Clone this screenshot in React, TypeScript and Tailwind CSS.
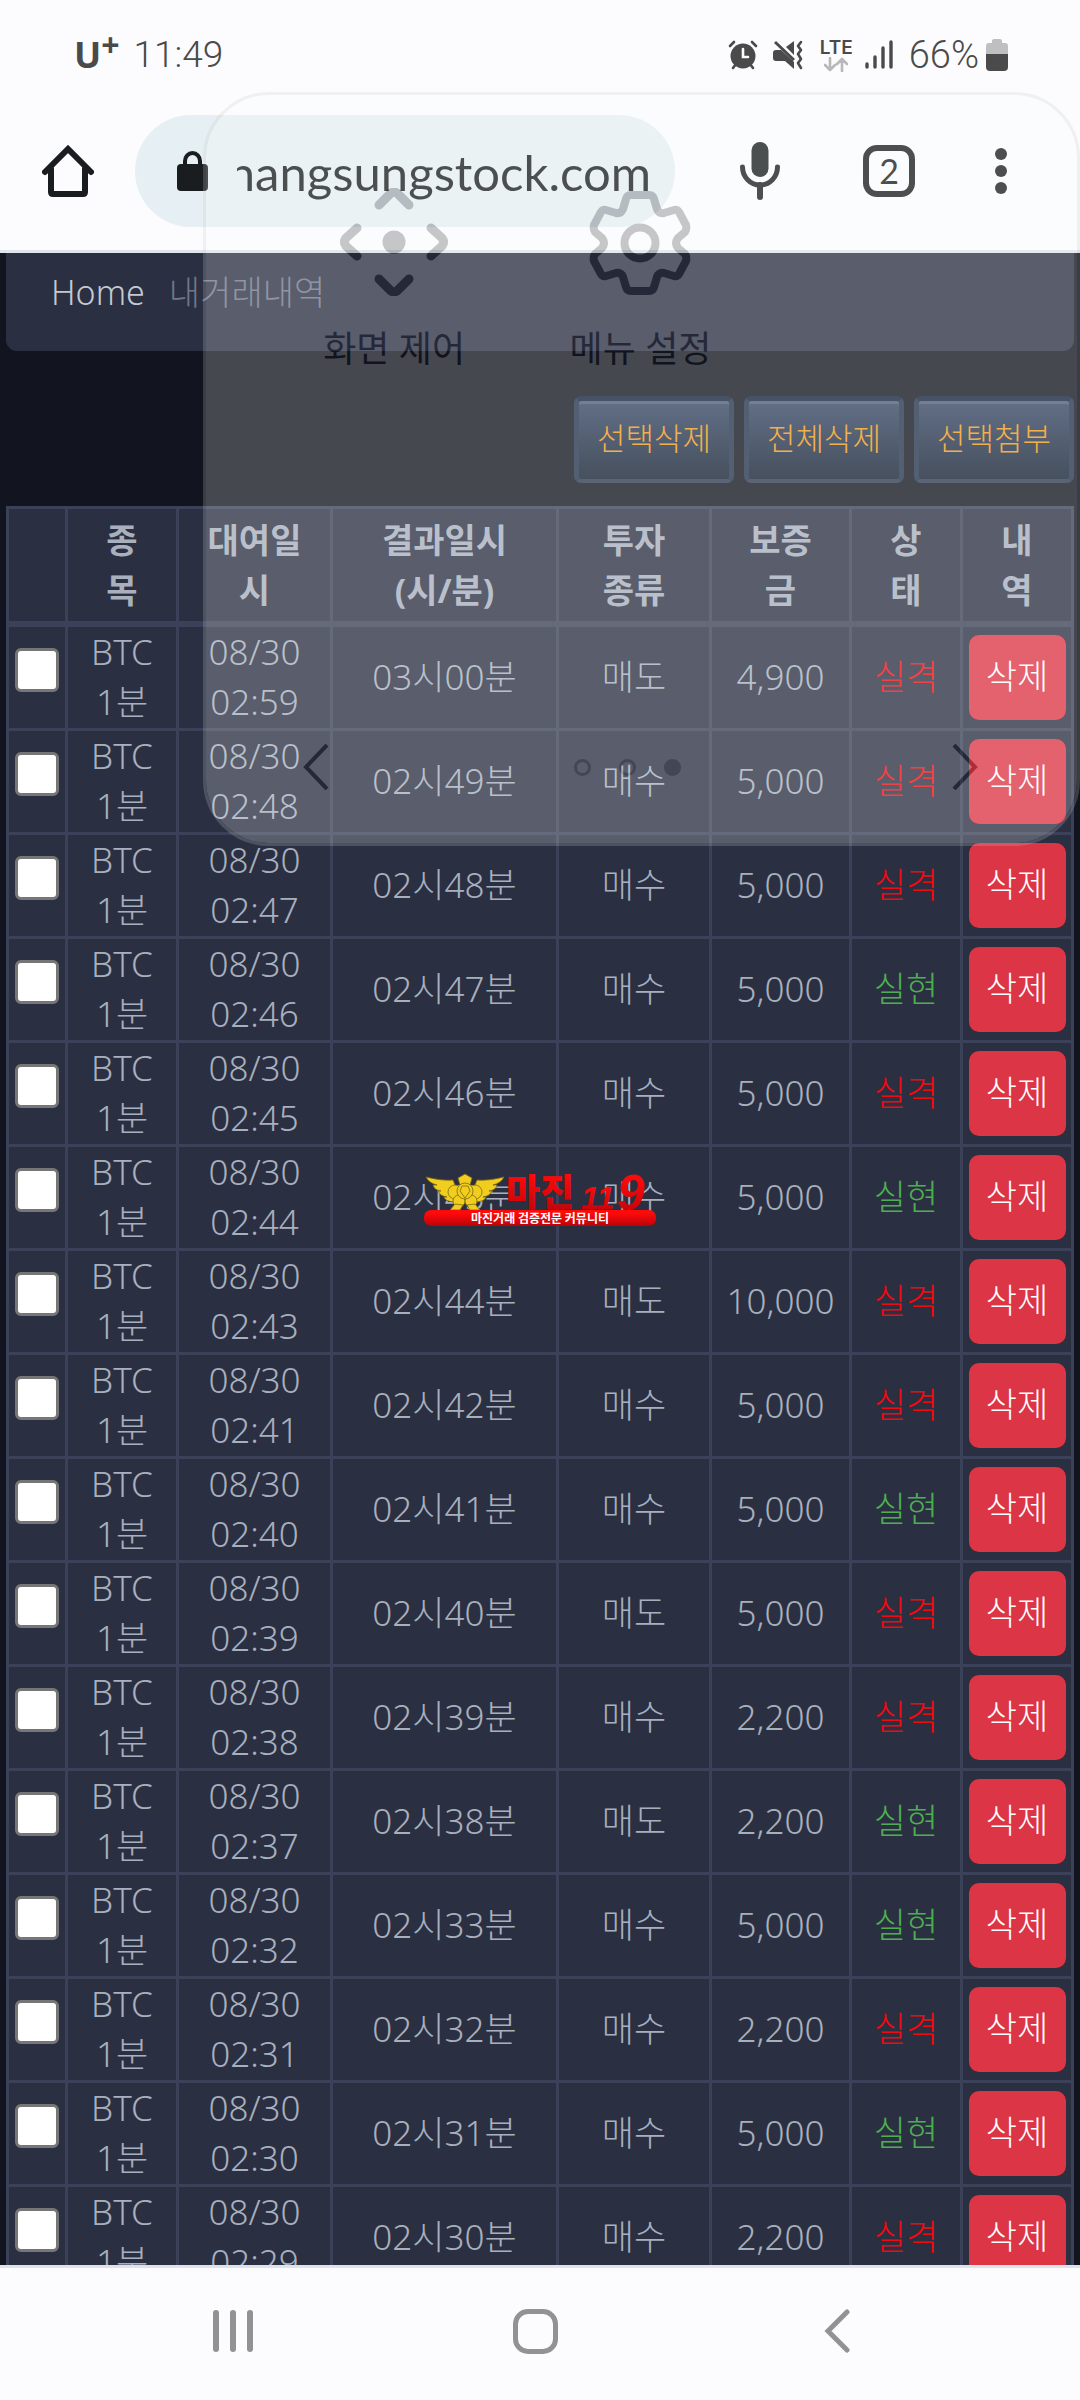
import { clsx } from "clsx";

type Trade = {
  time: string;
  result: string;
  type: string;
  deposit: string;
  won: boolean;
};

const trades: Trade[] = [
  { time: "02:59", result: "03시00분", type: "매도", deposit: "4,900", won: false },
  { time: "02:48", result: "02시49분", type: "매수", deposit: "5,000", won: false },
  { time: "02:47", result: "02시48분", type: "매수", deposit: "5,000", won: false },
  { time: "02:46", result: "02시47분", type: "매수", deposit: "5,000", won: true },
  { time: "02:45", result: "02시46분", type: "매수", deposit: "5,000", won: false },
  { time: "02:44", result: "02시45분", type: "매수", deposit: "5,000", won: true },
  { time: "02:43", result: "02시44분", type: "매도", deposit: "10,000", won: false },
  { time: "02:41", result: "02시42분", type: "매수", deposit: "5,000", won: false },
  { time: "02:40", result: "02시41분", type: "매수", deposit: "5,000", won: true },
  { time: "02:39", result: "02시40분", type: "매도", deposit: "5,000", won: false },
  { time: "02:38", result: "02시39분", type: "매수", deposit: "2,200", won: false },
  { time: "02:37", result: "02시38분", type: "매도", deposit: "2,200", won: true },
  { time: "02:32", result: "02시33분", type: "매수", deposit: "5,000", won: true },
  { time: "02:31", result: "02시32분", type: "매수", deposit: "2,200", won: false },
  { time: "02:30", result: "02시31분", type: "매수", deposit: "5,000", won: true },
  { time: "02:29", result: "02시30분", type: "매수", deposit: "2,200", won: false },
];

const headers = [
  [""],
  ["종", "목"],
  ["대여일", "시"],
  ["결과일시", "(시/분)"],
  ["투자", "종류"],
  ["보증", "금"],
  ["상", "태"],
  ["내", "역"],
];

const cell = "border-r-[3px] border-b-[3px] border-[#3b4158] px-0 pt-0 pb-[1px]";

function StatusBar() {
  return (
    <div className="flex h-[92px] items-center justify-between pt-[18px] pr-[72px] pl-[74px] text-[#4a4a4a]">
      <div className="flex items-center gap-[14px]">
        <div className="flex items-start font-['Open_Sans',sans-serif] font-bold">
          <span className="text-[36px] leading-[40px]">U</span>
          <span className="text-[32px] leading-[20px]">+</span>
        </div>
        <span className="font-['Roboto',sans-serif] text-[37px] leading-[40px] font-light">11:49</span>
      </div>
      <div className="flex items-center">
        {/* Alarm */}
        <svg className="mr-[15px] h-[30px] w-[30px]" viewBox="0 0 30 30" fill="none" stroke="currentColor" strokeLinecap="round">
          <circle cx="15" cy="16" r="12.5" fill="currentColor" stroke="none" />
          <path d="M2 6l4-4M28 6l-4-4M5 28l3-4M25 28l-3-4" strokeWidth="2.6" />
          <path d="M15 9v8h5" stroke="#fcfcfe" strokeWidth="2.6" />
        </svg>
        {/* Muted, vibrating */}
        <svg className="mr-[16px] h-[30px] w-[31px]" viewBox="0 0 31 30" fill="currentColor">
          <path d="M3 10h5l13 12v7l-9-8H3q-3 0-3-3v-5q0-3 3-3zM13 7l8-6v14zM3 1l19 18-2 2L1 3z" />
          <path d="M28 2l-3 4 3 4-3 4 3 5-3 4 3 5" fill="none" stroke="currentColor" strokeWidth="2.6" strokeLinecap="round" strokeLinejoin="round" />
        </svg>
        {/* LTE with data arrows */}
        <div className="mr-[12px] flex flex-col items-center">
          <span className="font-['Inter',sans-serif] text-[19px] leading-[18px] font-semibold">LTE</span>
          <svg className="h-[15px] w-[24px] text-[#b8b8b8]" viewBox="0 0 24 15" fill="none" stroke="currentColor" strokeWidth="2.6" strokeLinecap="round" strokeLinejoin="round">
            <path d="M6 1v12M1 8l5 5 5-5M18 14V2M13 7l5-5 5 5" />
          </svg>
        </div>
        <svg className="mr-[16px] h-[30px] w-[28px]" viewBox="0 0 28 30" stroke="currentColor" strokeWidth="3.4" strokeLinecap="round">
          <path d="M2 24v3M10 17v10M18 8v19M26 2v25" />
        </svg>
        <span className="mr-[7px] font-['Roboto',sans-serif] text-[38px] leading-[40px] font-light">66%</span>
        <svg className="h-[32px] w-[22px]" viewBox="0 0 22 32" fill="currentColor">
          <path d="M6 2q0-2 2-2h6q2 0 2 2v2h3q3 0 3 3v8H0V7q0-3 3-3h3z" fill="#bfbfc1" />
          <path d="M0 15h22v13q0 4-4 4H4q-4 0-4-4z" />
        </svg>
      </div>
    </div>
  );
}

function Toolbar() {
  return (
    <div className="flex h-[158px] items-center pr-[11px] text-[#1a1d1f]">
      <button aria-label="홈" className="flex w-[135px] shrink-0 justify-center">
        <svg className="h-[54px] w-[52px]" viewBox="0 0 52 54" fill="none" stroke="currentColor" strokeWidth="6" strokeLinejoin="round" strokeLinecap="round">
          <path d="M3 28L26 5l23 23" strokeLinejoin="miter" />
          <path d="M9 25v23q0 2 2 2h30q2 0 2-2V25" />
        </svg>
      </button>
      <div className="flex h-[112px] min-w-0 flex-1 items-center rounded-full bg-[#e6eff3] pr-[24px] pl-[42px]">
        <svg className="mr-[29px] h-[42px] w-[31px] shrink-0" viewBox="0 0 31 42" fill="currentColor">
          <rect x="0" y="14" width="31" height="27" rx="4" />
          <path d="M8 16v-5a7.500 8 0 0 1 15 0v5" fill="none" stroke="currentColor" strokeWidth="4" />
        </svg>
        <input
          dir="rtl"
          aria-label="주소"
          defaultValue="hangsungstock.com"
          className="min-w-0 flex-1 bg-transparent pt-[2px] font-['Lato',sans-serif] text-[49px] leading-[60px] font-normal outline-none"
        />
      </div>
      <button aria-label="음성 검색" className="flex w-[170px] shrink-0 justify-center">
        <svg className="h-[58px] w-[40px]" viewBox="0 0 40 58" fill="none" stroke="currentColor" strokeLinecap="round">
          <rect x="11.500" y="0" width="17" height="35" rx="8.500" fill="currentColor" stroke="none" />
          <path d="M2.500 25a17.500 18 0 0 0 35 0" strokeWidth="5" />
          <path d="M20 43v12" strokeWidth="6" />
        </svg>
      </button>
      <button
        aria-label="탭 2개"
        className="flex w-[88px] shrink-0 justify-center font-['Lato',sans-serif] text-[34px] leading-[40px] font-normal"
      >
        <span className="flex h-[52px] w-[52px] items-center justify-center rounded-[14px] border-6 border-current">2</span>
      </button>
      <button aria-label="메뉴" className="flex w-[136px] shrink-0 flex-col items-center gap-[5px]">
        <span className="h-[12px] w-[12px] rounded-full bg-current" />
        <span className="h-[12px] w-[12px] rounded-full bg-current" />
        <span className="h-[12px] w-[12px] rounded-full bg-current" />
      </button>
    </div>
  );
}

function ActionButton({ label }: { label: string }) {
  return (
    <button className="h-[87px] w-[160px] rounded-[7px] border-x-[5px] border-t-[5px] border-b-[4px] border-x-[#22324a] border-t-[#12203a] border-b-[#2b384e] bg-linear-to-b from-[#364665] to-[#121e31] pb-[4px] text-[31px] whitespace-nowrap text-[#f09a17] shadow-[inset_0_3px_0_#4d5b75]">
      {label}
    </button>
  );
}

function TradeTable() {
  return (
    <table className="mt-[23px] w-full table-fixed border-separate border-spacing-0 border-t-[3px] border-l-[3px] border-[#3b4158] bg-[#2b2f42] text-center text-[35px] leading-[50px] text-[#a8afbd]">
      <colgroup>
        <col className="w-[59px]" />
        <col className="w-[111px]" />
        <col className="w-[154px]" />
        <col className="w-[226px]" />
        <col className="w-[153px]" />
        <col className="w-[140px]" />
        <col className="w-[111px]" />
        <col className="w-[111px]" />
      </colgroup>
      <thead>
        <tr className="h-[118px] text-[34px]">
          {headers.map((lines, i) => (
            <th key={i} scope="col" className="border-r-[3px] border-b-[6px] border-[#3b4158] px-0 pt-0 pb-[1px] font-bold">
              {lines.map((line) => (
                <span key={line} className="block whitespace-nowrap">
                  {line}
                </span>
              ))}
            </th>
          ))}
        </tr>
      </thead>
      <tbody>
        {trades.map((t) => (
          <tr key={t.time} className="h-[104px]">
            <td className={cell}>
              <input
                type="checkbox"
                aria-label={`${t.time} 선택`}
                className="mx-auto mb-[14px] block h-[44px] w-[44px] appearance-none rounded-[6px] border-[3px] border-[#767676] bg-white"
              />
            </td>
            <td className={cell}>
              BTC
              <br />
              1분
            </td>
            <td className={cell}>
              08/30
              <br />
              {t.time}
            </td>
            <td className={cell}>{t.result}</td>
            <td className={cell}>{t.type}</td>
            <td className={cell}>{t.deposit}</td>
            <td className={clsx(cell, t.won ? "text-[#4caf50]" : "text-[#f00a0e]")}>
              {t.won ? "실현" : "실격"}
            </td>
            <td className={cell}>
              <button className="h-[85px] w-[97px] rounded-[10px] bg-[#dc3545] pb-[2px] align-middle text-[34px] whitespace-nowrap text-white">
                삭제
              </button>
            </td>
          </tr>
        ))}
      </tbody>
    </table>
  );
}

// Translucent assistant menu that floats over the browser
function AssistantMenu() {
  return (
    <div className="absolute top-[92px] right-0 left-[203px] flex h-[754px] flex-col justify-between rounded-[66px] border-[3px] border-[#c8c8c8] bg-[#fbfdfb] bg-clip-padding pt-[93px] pr-[67px] pb-[53px] pl-[65px] text-[#0f1218] opacity-[0.225]">
      <div className="grid grid-cols-3 text-[36px] leading-[40px] font-normal">
        <button className="flex flex-col items-center gap-[33px] whitespace-nowrap">
          <svg className="h-[108px] w-[110px]" viewBox="-55 -54 110 108" fill="none" stroke="currentColor" strokeWidth="9" strokeLinecap="round" strokeLinejoin="round">
            <circle r="11.500" fill="currentColor" stroke="none" />
            <path d="M-15 -37L-4 -48Q0 -52 4 -48L15 -37M-15 37L-4 48Q0 52 4 48L15 37" />
            <path d="M-37 -14L-48 -4Q-51 0 -48 4L-37 14M37 -14L48 -4Q51 0 48 4L37 14" />
          </svg>
          화면 제어
        </button>
        <button className="flex flex-col items-center gap-[33px] whitespace-nowrap">
          <svg className="h-[108px] w-[104px]" viewBox="-52 -55 104 108" fill="none" stroke="currentColor" strokeWidth="8" strokeLinejoin="round">
            <circle r="15.500" />
            <path d="M-9 -48H9Q13 -48 14 -44L17 -34Q19 -29 24 -30L34 -33Q37 -34 39 -31L46 -18Q47 -14 45 -11L38 -5Q34 0 38 5L45 11Q47 14 46 18L39 31Q37 34 34 33L24 30Q19 29 17 34L14 44Q13 48 9 48H-9Q-13 48 -14 44L-17 34Q-19 29 -24 30L-34 33Q-37 34 -39 31L-46 18Q-47 14 -45 11L-38 5Q-34 0 -38 -5L-45 -11Q-47 -14 -46 -18L-39 -31Q-37 -34 -34 -33L-24 -30Q-19 -29 -17 -34L-14 -44Q-13 -48 -9 -48Z" />
          </svg>
          메뉴 설정
        </button>
      </div>
      <div className="flex items-center justify-between px-[32px]">
        <button aria-label="이전">
          <svg className="h-[46px] w-[26px]" viewBox="0 0 26 46" fill="none" stroke="currentColor" strokeWidth="4">
            <path d="M24 1L3 23l21 22" />
          </svg>
        </button>
        <div className="flex gap-[28px] pr-[26px]">
          <span className="h-[17px] w-[17px] rounded-full border-[3px] border-[#999]" />
          <span className="h-[17px] w-[17px] rounded-full border-[3px] border-[#999]" />
          <span className="h-[17px] w-[17px] rounded-full bg-[#999]" />
        </div>
        <button aria-label="다음">
          <svg className="h-[46px] w-[26px]" viewBox="0 0 26 46" fill="none" stroke="currentColor" strokeWidth="4">
            <path d="M2 1l21 22L2 45" />
          </svg>
        </button>
      </div>
    </div>
  );
}

function Watermark() {
  return (
    <div className="pointer-events-none absolute inset-0 flex items-center justify-center">
      <svg className="h-[54px] w-[232px]" viewBox="0 0 232 54">
        <defs>
          <linearGradient id="red" x1="0" y1="0" x2="0" y2="1">
            <stop offset="0.200" stopColor="#ff0a0a" />
            <stop offset="1" stopColor="#b80408" />
          </linearGradient>
        </defs>
        {/* Eagle emblem */}
        <g fill="#f0cd1e" stroke="#80690c" strokeWidth="0.800">
          <path d="M2 4q16 4 27 3l4 10-4 12q-8-1-9-5h3q-7-1-9-6h3q-7-1-8-6h4Q5 10 2 4z" />
          <path d="M80 4q-16 4-27 3l-4 10 4 12q8-1 9-5h-3q7-1 9-6h-3q7-1 8-6h-4Q77 10 80 4z" />
          <path d="M34 5l7-4 7 4-2 7H36z" />
          <circle cx="31" cy="19" r="7" />
          <circle cx="51" cy="19" r="7" />
          <circle cx="35" cy="28" r="6" />
          <circle cx="47" cy="28" r="6" />
          <circle cx="41" cy="18" r="8" />
          <path d="M38 13h6l2 5-5 7-5-7zM31 31l-5 6h10l3-5zM51 31l5 6H46l-3-5z" />
        </g>
        <g fill="url(#red)">
          <text x="82" y="33" fontSize="37" fontWeight="900" fontFamily="'Noto Sans CJK KR', sans-serif">
            마진
          </text>
          <text x="157" y="36" fontSize="32" fontWeight="700" fontStyle="italic" fontFamily="'Liberation Sans', sans-serif">
            11
          </text>
          <text x="193" y="37" fontSize="50" fontWeight="700" fontStyle="italic" fontFamily="'Liberation Sans', sans-serif">
            9
          </text>
          <rect y="37" width="232" height="16" rx="7" />
        </g>
        <text x="116" y="50" textAnchor="middle" fontSize="12" fontWeight="700" fill="#fff" fontFamily="'Noto Sans CJK KR', sans-serif">
          마진거래 검증전문 커뮤니티
        </text>
      </svg>
    </div>
  );
}

function NavigationBar() {
  return (
    <nav className="grid h-[135px] shrink-0 grid-cols-3 border-t-[3px] border-[#dde3ea] bg-[#fcfcfe] pr-[92px] pb-[6px] pl-[82px] text-[#929292]">
      <button aria-label="최근 앱" className="flex items-center justify-center gap-[11px]">
        <span className="h-[42px] w-[6px] rounded-full bg-current" />
        <span className="h-[42px] w-[6px] rounded-full bg-current" />
        <span className="h-[42px] w-[6px] rounded-full bg-current" />
      </button>
      <button aria-label="홈 화면" className="flex items-center justify-center">
        <span className="h-[45px] w-[45px] rounded-[15px] border-[5px] border-current" />
      </button>
      <button aria-label="뒤로" className="flex items-center justify-center">
        <svg className="h-[44px] w-[26px]" viewBox="0 0 26 44" fill="none" stroke="currentColor" strokeWidth="5" strokeLinecap="round">
          <path d="M23 3L4 22l19 19" strokeLinejoin="miter" />
        </svg>
      </button>
    </nav>
  );
}

export default function App() {
  return (
    <div className="relative flex h-screen flex-col overflow-hidden bg-[#12141f] font-['Noto_Sans','Noto_Sans_CJK_KR',sans-serif] font-light">
      <header className="shrink-0 border-b-[3px] border-[#dfe5ea] bg-[#fcfcfe]">
        <StatusBar />
        <Toolbar />
      </header>

      <main className="min-h-0 flex-1 overflow-hidden px-[6px]">
        <div className="flex h-[98px] items-center gap-[24px] rounded-b-[11px] bg-[#2b2f42] px-[45px] pb-[20px] text-[34px] leading-[50px]">
          <a href="#" className="text-[#c5c8d0]">
            Home
          </a>
          <span className="text-[#71778a]">내거래내역</span>
        </div>
        <div className="mt-[45px] flex justify-end gap-[10px]">
          <ActionButton label="선택삭제" />
          <ActionButton label="전체삭제" />
          <ActionButton label="선택첨부" />
        </div>
        <TradeTable />
      </main>

      <NavigationBar />
      <AssistantMenu />
      <Watermark />
    </div>
  );
}
